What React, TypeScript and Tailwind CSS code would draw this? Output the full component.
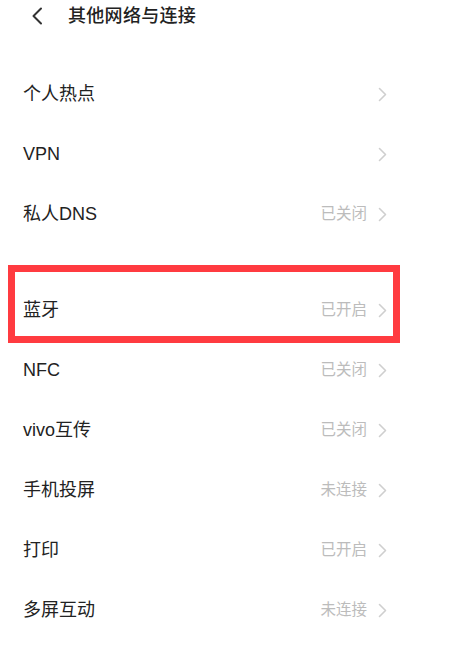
const sections: { label: string; status?: string; marked?: boolean }[][] = [
  [{ label: '个人热点' }, { label: 'VPN' }, { label: '私人DNS', status: '已关闭' }],
  [
    { label: '蓝牙', status: '已开启', marked: true },
    { label: 'NFC', status: '已关闭' },
    { label: 'vivo互传', status: '已关闭' },
    { label: '手机投屏', status: '未连接' },
    { label: '打印', status: '已开启' },
    { label: '多屏互动', status: '未连接' },
  ],
]

function Chevron() {
  return (
    <svg width="9" height="15" viewBox="0 0 9 15" fill="none" className="shrink-0">
      <path d="M1.5 1.5 L7.5 7.5 L1.5 13.5" stroke="#cfcfcf" strokeWidth="1.6" strokeLinecap="round" strokeLinejoin="round" />
    </svg>
  )
}

export default function App() {
  return (
    <div
      className="w-[462px] h-[666px] overflow-hidden bg-white text-[#222]"
      style={{ fontFamily: '"Liberation Sans", "Noto Sans CJK SC", sans-serif' }}
    >
      <div className="flex h-[31px] items-center">
        <svg width="12" height="18" viewBox="0 0 12 18" fill="none" className="ml-[31px]">
          <path d="M10 1.5 L2.5 9 L10 16.5" stroke="#333" strokeWidth="2" strokeLinecap="round" strokeLinejoin="round" />
        </svg>
        <span className="ml-[25px] text-[18px] font-medium leading-none tracking-[0.3px]">其他网络与连接</span>
      </div>

      <div className="mt-[33px] flex flex-col gap-[36px] pl-[8px] pr-[62px]">
        {sections.map((rows, i) => (
          <div key={i} className="flex flex-col">
            {rows.map((row) => (
              <div key={row.label} className="relative flex h-[60px] items-center pl-[15px] pr-[13px]">
                <span className="flex-1 text-[18px] leading-none">{row.label}</span>
                {row.status && (
                  <span className="mr-[11px] text-[15.5px] leading-none text-[#bcbcbc]">{row.status}</span>
                )}
                <Chevron />
                {row.marked && (
                  <div className="pointer-events-none absolute left-0 right-0 top-[-15px] bottom-[-3px] border-[7px] border-[#ff3b40]" />
                )}
              </div>
            ))}
          </div>
        ))}
      </div>
    </div>
  )
}
